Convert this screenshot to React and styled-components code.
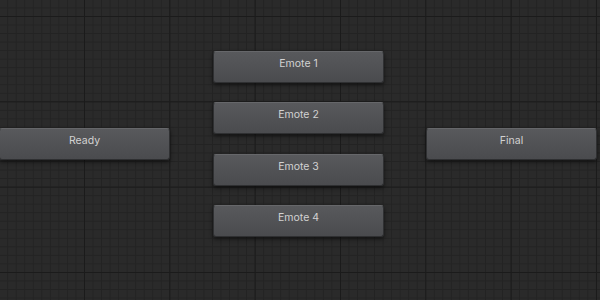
import React from "react";
import styled, { createGlobalStyle } from "styled-components";

const Global = createGlobalStyle`
  html, body { margin: 0; padding: 0; background: #2a2a2a; }
  body { font-family: Inter, "Liberation Sans", sans-serif; }
`;

const Canvas = styled.div`
  position: relative;
  width: 600px;
  height: 300px;
  overflow: hidden;
  background-color: #2a2a2a;
  background-image:
    linear-gradient(to right, #1b1b1b 1px, transparent 1px),
    linear-gradient(to bottom, #1b1b1b 1px, transparent 1px),
    linear-gradient(to right, #232323 1px, transparent 1px),
    linear-gradient(to bottom, #232323 1px, transparent 1px);
  background-size: 85.333px 85.333px, 85.333px 85.333px, 8.5333px 8.5333px,
    8.5333px 8.5333px;
  background-position: 84px 16px, 84px 16px, 84px 16px, 84px 16px;
`;

const Graph = styled.div`
  display: flex;
  align-items: center;
  padding-top: 51px;
  margin-left: -1px;
`;

const Column = styled.div`
  display: flex;
  flex-direction: column;
  gap: 19.4px;
  margin: 0 ${(p) => p.$right}px 0 ${(p) => p.$left}px;
`;

const Node = styled.div`
  box-sizing: border-box;
  width: 171px;
  height: 32px;
  border-radius: 3px;
  border: 1px solid #2f3032;
  border-top-color: #66676a;
  background: linear-gradient(to bottom, #58595c, #4a4b4e);
  box-shadow: 0 2px 4px rgba(0, 0, 0, 0.55);
  color: #d2d2d2;
  font-size: 10.5px;
  line-height: 1;
  text-align: center;
  padding-top: 7px;
`;

const states = ["Emote 1", "Emote 2", "Emote 3", "Emote 4"];

export default function App() {
  return (
    <>
      <Global />
      <Canvas>
        <Graph>
          <Node>Ready</Node>
          <Column $left={43} $right={42}>
            {states.map((s) => (
              <Node key={s}>{s}</Node>
            ))}
          </Column>
          <Node>Final</Node>
        </Graph>
      </Canvas>
    </>
  );
}
